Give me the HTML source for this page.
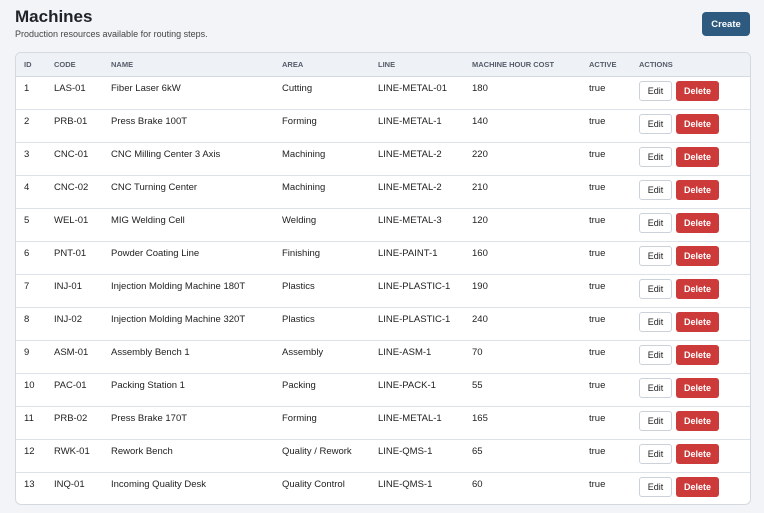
<!DOCTYPE html>
<html><head><meta charset="utf-8"><style>
body{margin:0;background:#f2f4f7;font-family:"Liberation Sans",sans-serif;color:#222;width:764px;height:513px;overflow:hidden;position:relative}
h1{position:absolute;left:15px;top:7px;margin:0;font-size:17px;font-weight:bold;color:#1f2328}
.sub{position:absolute;left:15px;top:29px;font-size:9px;color:#444}
.create{position:absolute;left:702px;top:12px;width:48px;height:24px;background:#2e5a80;color:#fff;border-radius:4px;font-size:9.5px;font-weight:bold;text-align:center;line-height:25px}
.card{position:absolute;left:15px;top:52px;width:734px;height:451px;background:#fff;border:1px solid #d5dae1;border-radius:6px;overflow:hidden}
table{border-collapse:collapse;width:100%;font-size:9.5px}
th{background:#eef1f5;height:23px;text-align:left;font-size:7.5px;color:#555d6a;font-weight:bold;padding:0;border-bottom:1px solid #d5dae1}
td{height:33px;vertical-align:top;padding:6px 0 0 0;border-bottom:1px solid #dde2e8;box-sizing:border-box}
tr:last-child td{border-bottom:none}
.c0{padding-left:8px;width:30px}
td:last-child{padding-top:4px}
.e,.d{display:inline-block;height:20px;line-height:20px;font-size:9px;border-radius:3px;text-align:center;vertical-align:top}
.e{width:31px;border:1px solid #ccd2da;background:#fff;color:#222;height:18px;line-height:18px}
.d{width:43px;background:#cc3a3a;color:#fff;font-weight:bold;margin-left:4px}
</style></head><body>
<h1>Machines</h1>
<div class="sub">Production resources available for routing steps.</div>
<div class="create">Create</div>
<div class="card"><table>
<colgroup><col style="width:38px"><col style="width:57px"><col style="width:171px"><col style="width:96px"><col style="width:94px"><col style="width:117px"><col style="width:50px"><col></colgroup>
<tr><th class="c0">ID</th><th>CODE</th><th>NAME</th><th>AREA</th><th>LINE</th><th>MACHINE HOUR COST</th><th>ACTIVE</th><th>ACTIONS</th></tr>
<tr><td class="c0">1</td><td>LAS-01</td><td>Fiber Laser 6kW</td><td>Cutting</td><td>LINE-METAL-01</td><td>180</td><td>true</td><td><span class="e">Edit</span><span class="d">Delete</span></td></tr>
<tr><td class="c0">2</td><td>PRB-01</td><td>Press Brake 100T</td><td>Forming</td><td>LINE-METAL-1</td><td>140</td><td>true</td><td><span class="e">Edit</span><span class="d">Delete</span></td></tr>
<tr><td class="c0">3</td><td>CNC-01</td><td>CNC Milling Center 3 Axis</td><td>Machining</td><td>LINE-METAL-2</td><td>220</td><td>true</td><td><span class="e">Edit</span><span class="d">Delete</span></td></tr>
<tr><td class="c0">4</td><td>CNC-02</td><td>CNC Turning Center</td><td>Machining</td><td>LINE-METAL-2</td><td>210</td><td>true</td><td><span class="e">Edit</span><span class="d">Delete</span></td></tr>
<tr><td class="c0">5</td><td>WEL-01</td><td>MIG Welding Cell</td><td>Welding</td><td>LINE-METAL-3</td><td>120</td><td>true</td><td><span class="e">Edit</span><span class="d">Delete</span></td></tr>
<tr><td class="c0">6</td><td>PNT-01</td><td>Powder Coating Line</td><td>Finishing</td><td>LINE-PAINT-1</td><td>160</td><td>true</td><td><span class="e">Edit</span><span class="d">Delete</span></td></tr>
<tr><td class="c0">7</td><td>INJ-01</td><td>Injection Molding Machine 180T</td><td>Plastics</td><td>LINE-PLASTIC-1</td><td>190</td><td>true</td><td><span class="e">Edit</span><span class="d">Delete</span></td></tr>
<tr><td class="c0">8</td><td>INJ-02</td><td>Injection Molding Machine 320T</td><td>Plastics</td><td>LINE-PLASTIC-1</td><td>240</td><td>true</td><td><span class="e">Edit</span><span class="d">Delete</span></td></tr>
<tr><td class="c0">9</td><td>ASM-01</td><td>Assembly Bench 1</td><td>Assembly</td><td>LINE-ASM-1</td><td>70</td><td>true</td><td><span class="e">Edit</span><span class="d">Delete</span></td></tr>
<tr><td class="c0">10</td><td>PAC-01</td><td>Packing Station 1</td><td>Packing</td><td>LINE-PACK-1</td><td>55</td><td>true</td><td><span class="e">Edit</span><span class="d">Delete</span></td></tr>
<tr><td class="c0">11</td><td>PRB-02</td><td>Press Brake 170T</td><td>Forming</td><td>LINE-METAL-1</td><td>165</td><td>true</td><td><span class="e">Edit</span><span class="d">Delete</span></td></tr>
<tr><td class="c0">12</td><td>RWK-01</td><td>Rework Bench</td><td>Quality / Rework</td><td>LINE-QMS-1</td><td>65</td><td>true</td><td><span class="e">Edit</span><span class="d">Delete</span></td></tr>
<tr><td class="c0">13</td><td>INQ-01</td><td>Incoming Quality Desk</td><td>Quality Control</td><td>LINE-QMS-1</td><td>60</td><td>true</td><td><span class="e">Edit</span><span class="d">Delete</span></td></tr>
</table></div>
</body></html>
